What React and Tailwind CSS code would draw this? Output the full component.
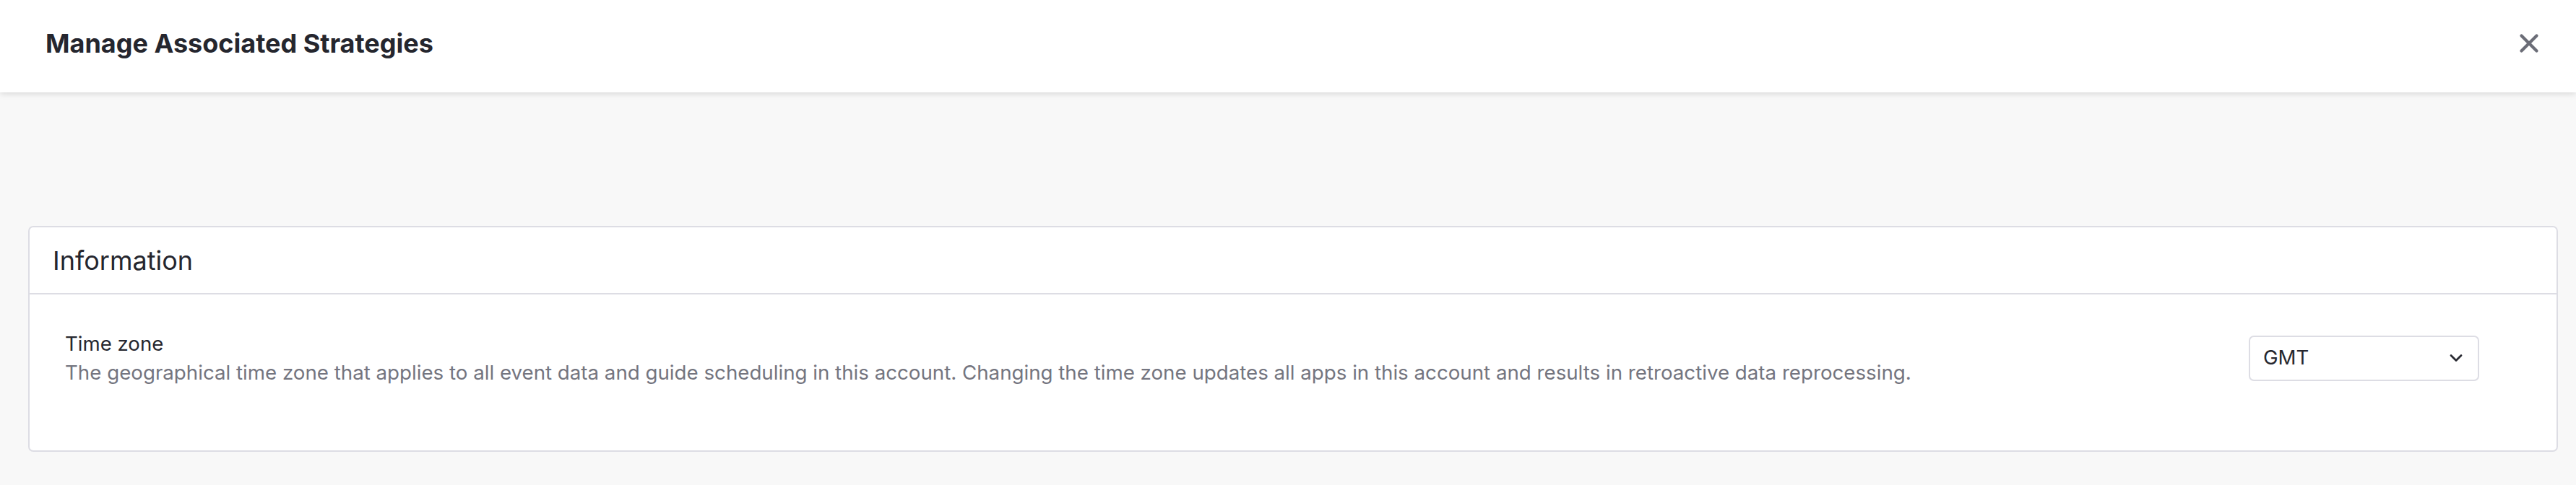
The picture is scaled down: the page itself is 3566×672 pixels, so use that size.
import React from 'react';
import { X, ChevronDown } from 'lucide-react';

const font = { fontFamily: 'Inter, "Noto Sans", sans-serif' };

const App = () => {
  return (
    <div className="min-h-screen bg-[#f8f8f8] text-[#26272f]" style={font}>
      {/* Header */}
      <header className="h-[128px] bg-white flex items-center justify-between pl-[63px] pr-[44px] pb-[8px] shadow-[0_2px_8px_rgba(0,0,0,0.13)] relative">
        <h1 className="text-[36px] leading-[54px] font-bold text-[#25262e]">Manage Associated Strategies</h1>
        <button className="text-[#6b6d77] flex items-center justify-center">
          <X size={42} strokeWidth={2.4} />
        </button>
      </header>

      {/* Card */}
      <div className="pt-[185px] pl-[39px] pr-[25px]">
        <section className="bg-white border-2 border-[#dddde4] rounded-[7px]">
          <div className="h-[93px] flex items-center pl-[32px] border-b-2 border-[#dddde4]">
            <h2 className="text-[36px] leading-[54px] font-normal text-[#25262e]">Information</h2>
          </div>
          <div className="flex items-center justify-between pl-[49px] pr-[107px] pt-[48px] pb-[88px]">
            <div>
              <div className="text-[27.6px] leading-[40px] text-[#26272f]">Time zone</div>
              <div className="text-[27.7px] leading-[40px] text-[#74757f]">
                The geographical time zone that applies to all event data and guide scheduling in this account. Changing the time zone updates all apps in this account and results in retroactive data reprocessing.
              </div>
            </div>
            <div className="w-[319px] h-[63px] border-2 border-[#dddde4] rounded-[7px] flex items-center justify-between pl-[18px] pr-[16px] bg-white">
              <span className="text-[27.6px] text-[#26272f]">GMT</span>
              <ChevronDown size={28} strokeWidth={2.4} className="text-[#2a2b33]" />
            </div>
          </div>
        </section>
      </div>
    </div>
  );
};

export default App;
